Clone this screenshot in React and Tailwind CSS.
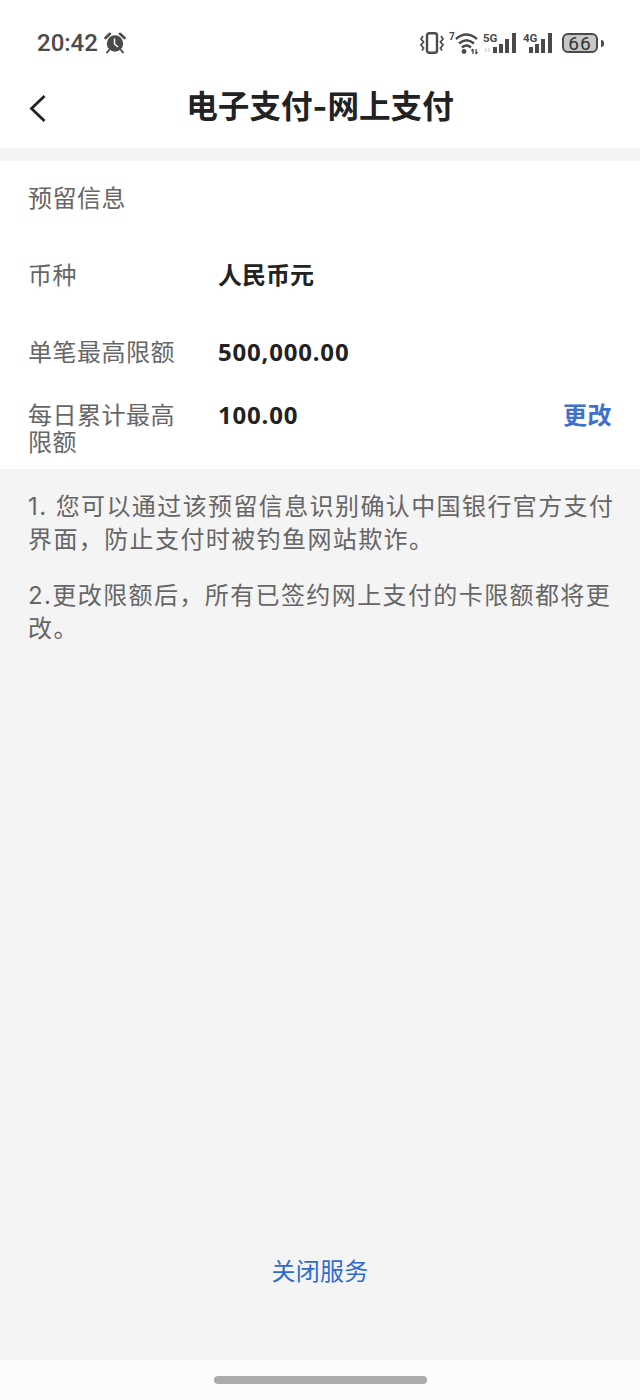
const FONT = { fontFamily: 'Inter, "Noto Sans CJK SC", sans-serif' };

const AlarmIcon = () => (
  <svg width="22" height="22" viewBox="0 0 22 22" fill="none">
    <path d="M1.5 6 L6 1.8 M20.5 6 L16 1.8" stroke="#4a4a4a" strokeWidth="2.6" strokeLinecap="round" />
    <circle cx="11" cy="11.5" r="8.2" fill="#4a4a4a" />
    <path d="M10.5 6.5 V12 L14 15" stroke="#fff" strokeWidth="1.5" />
    <path d="M5 18 L3 20.5 M17 18 L19 20.5" stroke="#4a4a4a" strokeWidth="2" strokeLinecap="round" />
  </svg>
);

const VibrateIcon = () => (
  <svg width="24" height="22" viewBox="0 0 24 22" fill="none" stroke="#4a4a4a">
    <rect x="7" y="1.2" width="10" height="19.6" rx="2.2" strokeWidth="2.4" />
    <path d="M3 4 L1 7 L3.6 10 L1 13 L3.6 16 L2 18.5 M21 4 L23 7 L20.4 10 L23 13 L20.4 16 L22 18.5" strokeWidth="1.7" />
  </svg>
);

const WifiIcon = () => (
  <svg width="30" height="24" viewBox="0 0 30 24" fill="none">
    <text x="0" y="9" fontSize="10" fontWeight="700" fill="#4a4a4a" fontFamily="Roboto">7</text>
    <path d="M7 8 Q17 -1 28 8 M10 12.5 Q17.5 6 25 12.5 M13 16.5 Q17.5 12.5 22 16.5" stroke="#4a4a4a" strokeWidth="2.4" />
    <circle cx="15" cy="20.5" r="2.4" fill="#4a4a4a" />
    <path d="M24 18 V23 M27 18 V23 M22.5 20 L24 18 M27 23 L28.5 21" stroke="#4a4a4a" strokeWidth="1.3" />
  </svg>
);

const Signal = ({ label, width, arrows }) => (
  <svg width={width} height="22" viewBox={`0 0 ${width} 22`}>
    <text x="0" y="10" fontSize="11.5" fontWeight="700" fill="#4a4a4a" fontFamily="Roboto">{label}</text>
    {arrows && <path d="M3 16 V20 M6 16 V20" stroke="#c8c8c8" strokeWidth="1.2" />}
    <rect x={width - 24} y="15" width="4" height="6" fill="#4a4a4a" />
    <rect x={width - 18} y="12" width="4" height="9" fill="#4a4a4a" />
    <rect x={width - 12} y="7" width="4" height="14" fill="#4a4a4a" />
    <rect x={width - 5} y="1" width="4" height="20" fill="#4a4a4a" />
  </svg>
);

const Battery = () => (
  <div className="flex items-center gap-[3px]">
    <div className="flex h-[20px] w-[36px] items-center justify-center rounded-[6px] border-2 border-[#4a4a4a] bg-[#c8c8c8] text-[19px] leading-none tracking-[1px] text-[#333]" style={{ fontFamily: 'Roboto, sans-serif' }}>
      66
    </div>
    <span className="h-[7px] w-[3px] rounded-r bg-[#4a4a4a]" />
  </div>
);

const Row = ({ label, value, action, className }) => (
  <div className={`flex items-start px-[28px] ${className}`}>
    <div className="w-[190px] shrink-0 pr-[30px] text-[24px] leading-[27px] tracking-[0.5px] text-[#666666]">{label}</div>
    <div className="flex-1 text-[24px] font-bold leading-[27px] text-[#222222]">{value}</div>
    {action && <div className="text-[24px] font-bold leading-[27px] tracking-[0.5px] text-[#3f6fd0]">{action}</div>}
  </div>
);

// digits in the reference are narrower than Inter, Noto Sans with a little spacing fits
const Amount = ({ children }) => (
  <span className="-mt-[1px] block tracking-[0.8px]" style={{ fontFamily: '"Noto Sans", sans-serif' }}>{children}</span>
);

export default function App() {
  return (
    <div className="flex h-[1400px] w-[640px] flex-col bg-[#f4f4f4]" style={FONT}>
      <div className="bg-white">
        <div className="flex h-[72px] items-center justify-between pl-[37px] pr-[36px] pt-[14px]">
          <div className="flex items-center gap-[6px]">
            <span className="text-[24px] font-medium text-[#4a4a4a]" style={{ fontFamily: 'Roboto, sans-serif' }}>20:42</span>
            <AlarmIcon />
          </div>
          <div className="flex items-center">
            <VibrateIcon />
            <div className="w-[5px]" />
            <WifiIcon />
            <div className="w-[4px]" />
            <Signal label="5G" width={34} arrows />
            <div className="w-[6px]" />
            <Signal label="4G" width={30} />
            <div className="w-[9px]" />
            <Battery />
          </div>
        </div>
        <div className="relative flex h-[76px] items-center justify-center pb-[6px]">
          <svg className="absolute left-[28px] top-[23px]" width="20" height="28" viewBox="0 0 20 28" fill="none">
            <path d="M16.5 1 L3.5 13.5 L16.5 26" stroke="#222" strokeWidth="2.8" />
          </svg>
          <h1 className="text-[31.6px] font-bold leading-none text-[#222222]">电子支付-网上支付</h1>
        </div>
      </div>

      <div className="mt-[13px] bg-white pb-[13px]">
        <div className="px-[28px] pt-[21px] text-[24px] leading-[34px] tracking-[0.5px] text-[#666666]">预留信息</div>
        <Row label="币种" value="人民币元" className="mt-[46px]" />
        <Row label="单笔最高限额" value={<Amount>500,000.00</Amount>} className="mt-[50px]" />
        <Row label="每日累计最高限额" value={<Amount>100.00</Amount>} action="更改" className="mt-[36px]" />
      </div>

      <div className="flex-1 pl-[28px] pr-[20px] pt-[21px] text-[24px] leading-[33px] tracking-[1.4px] text-[#666666]">
        <p>1. 您可以通过该预留信息识别确认中国银行官方支付界面，防止支付时被钓鱼网站欺诈。</p>
        <p className="mt-[23px]">2.更改限额后，所有已签约网上支付的卡限额都将更改。</p>
      </div>

      <div className="pb-[71px] text-center text-[24px] leading-[34px] tracking-[0.3px] text-[#2f6bd0]">关闭服务</div>

      <div className="flex h-[40px] items-start justify-center bg-[#fcfcfc] pt-[16px]">
        <div className="h-[8px] w-[213px] rounded-full bg-[#ababab]" />
      </div>
    </div>
  );
}
